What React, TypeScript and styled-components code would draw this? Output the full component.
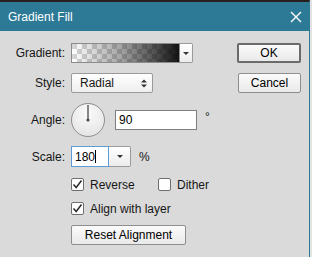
import styled, { createGlobalStyle } from "styled-components";

const GlobalStyle = createGlobalStyle`
  html, body {
    margin: 0;
    padding: 0;
    background: #e2e2e2;
  }
  body {
    font-family: "Liberation Sans", Arial, sans-serif;
    font-size: 12px;
    color: #161616;
  }
`;

export default function App() {
  return (
    <>
      <GlobalStyle />
      <Window>
        <TitleBar>
          <span>Gradient Fill</span>
          <svg width="12" height="12" viewBox="0 0 12 12">
            <path d="M1 1 L11 11 M11 1 L1 11" stroke="#fff" strokeWidth="1.4" />
          </svg>
        </TitleBar>
        <Body>
          <Form>
            <Row $h={20}>
              <Label>Gradient:</Label>
              <Combo $h={20}>
                <GradientSwatch />
                <DropButton $w={13}>
                  <Caret />
                </DropButton>
              </Combo>
            </Row>
            <Row $h={20} $mt={10}>
              <Label>Style:</Label>
              <Select>
                <span>Radial</span>
                <svg width="6" height="9" viewBox="0 0 6 9">
                  <path d="M0 3.5 L3 0.5 L6 3.5 Z M0 5.5 L3 8.5 L6 5.5 Z" fill="#333" />
                </svg>
              </Select>
            </Row>
            <Row $h={34} $mt={10}>
              <Label>Angle:</Label>
              <Inline $gap={10}>
                <Dial>
                  <svg width="34" height="34" viewBox="0 0 34 34">
                    <line x1="17" y1="17" x2="17" y2="2" stroke="#4a4a4a" strokeWidth="1.3" />
                    <circle cx="17" cy="17" r="1.6" fill="#4a4a4a" />
                  </svg>
                </Dial>
                <TextBox $w={82}>90</TextBox>
                <Unit $raised>°</Unit>
              </Inline>
            </Row>
            <Row $h={21} $mt={9}>
              <Label>Scale:</Label>
              <Inline $gap={8}>
                <Combo $h={21}>
                  <TextBox $w={38} $focused>
                    180<Cursor />
                  </TextBox>
                  <DropButton $w={22}>
                    <Caret />
                  </DropButton>
                </Combo>
                <Unit>%</Unit>
              </Inline>
            </Row>
            <Row $h={15} $mt={10}>
              <span />
              <Inline $gap={0}>
                <Check $w={87}>
                  <Box $checked />
                  Reverse
                </Check>
                <Check>
                  <Box />
                  Dither
                </Check>
              </Inline>
            </Row>
            <Row $h={15} $mt={9}>
              <span />
              <Check>
                <Box $checked />
                Align with layer
              </Check>
            </Row>
            <Row $h={20} $mt={9}>
              <span />
              <Button $w={115}>Reset Alignment</Button>
            </Row>
          </Form>
          <Actions>
            <Button $w={64} $default>OK</Button>
            <Button $w={63}>Cancel</Button>
          </Actions>
        </Body>
      </Window>
    </>
  );
}

function Box({ $checked }: { $checked?: boolean }) {
  return (
    <CheckBox>
      {$checked && (
        <svg width="11" height="11" viewBox="0 0 11 11">
          <path d="M1.5 5.5 L4.2 8.5 L9.5 1.5" fill="none" stroke="#2b2b2b" strokeWidth="1.5" />
        </svg>
      )}
    </CheckBox>
  );
}

const Window = styled.div`
  box-sizing: border-box;
  width: 310px;
  height: 257px;
  border-top: 2px solid #2a1d1e;
  border-right: 1px solid #2d7a97;
  background: #dadada;
`;

const TitleBar = styled.div`
  height: 29px;
  display: flex;
  align-items: center;
  justify-content: space-between;
  padding: 0 7px 0 8px;
  background: #2d7a97;
  color: #fff;
  font-size: 12px;
`;

const Body = styled.div`
  display: flex;
  padding-top: 12px;
`;

const Form = styled.div`
  display: flex;
  flex-direction: column;
  width: 220px;
`;

const Row = styled.div<{ $h: number; $mt?: number }>`
  display: grid;
  grid-template-columns: 65px auto;
  column-gap: 6px;
  align-items: center;
  height: ${(p) => p.$h}px;
  margin-top: ${(p) => p.$mt ?? 0}px;
`;

const Label = styled.span`
  text-align: right;
  white-space: nowrap;
`;

const Inline = styled.div<{ $gap: number }>`
  display: flex;
  align-items: center;
  gap: ${(p) => p.$gap}px;
`;

const Combo = styled.div<{ $h: number }>`
  display: flex;
  height: ${(p) => p.$h}px;
`;

const GradientSwatch = styled.div`
  box-sizing: border-box;
  width: 109px;
  height: 100%;
  border: 1px solid #8c8c8c;
  background:
    linear-gradient(to right, rgba(0, 0, 0, 0) 0%, rgba(0, 0, 0, 0.35) 45%, rgba(0, 0, 0, 0.92) 100%),
    repeating-conic-gradient(#ffffff 0% 25%, #d6d6d6 0% 50%) 0 0 / 10px 10px;
`;

const DropButton = styled.div<{ $w: number }>`
  box-sizing: border-box;
  width: ${(p) => p.$w}px;
  height: 100%;
  display: flex;
  align-items: center;
  justify-content: center;
  border: 1px solid #9a9a9a;
  border-left: none;
  border-radius: 0 2px 2px 0;
  background: linear-gradient(#ffffff, #ececec);
`;

const Caret = styled.span`
  width: 0;
  height: 0;
  border-left: 3px solid transparent;
  border-right: 3px solid transparent;
  border-top: 3px solid #333;
`;

const Select = styled.div`
  box-sizing: border-box;
  width: 82px;
  height: 20px;
  display: flex;
  align-items: center;
  justify-content: space-between;
  padding: 0 5px 0 8px;
  border: 1px solid #9a9a9a;
  border-radius: 2px;
  background: linear-gradient(#fefefe, #efefef);
`;

const Dial = styled.div`
  box-sizing: border-box;
  width: 34px;
  height: 34px;
  border-radius: 50%;
  border: 1px solid #8e8e8e;
  background: radial-gradient(circle at 50% 30%, #fafafa, #e6e6e6 80%);
  display: flex;
  align-items: center;
  justify-content: center;

  svg {
    margin: -1px;
  }
`;

const TextBox = styled.div<{ $w: number; $focused?: boolean }>`
  box-sizing: border-box;
  width: ${(p) => p.$w}px;
  height: ${(p) => (p.$focused ? "100%" : "20px")};
  display: flex;
  align-items: center;
  padding-left: 3px;
  background: #fff;
  border: 1px solid ${(p) => (p.$focused ? "#5c9bd6" : "#7e7e7e")};
  color: #000;
`;

const Cursor = styled.span`
  width: 1px;
  height: 13px;
  background: #000;
`;

const Unit = styled.span<{ $raised?: boolean }>`
  margin-left: ${(p) => (p.$raised ? "-2px" : "0")};
  position: relative;
  top: ${(p) => (p.$raised ? "-3px" : "0")};
`;

const Check = styled.label<{ $w?: number }>`
  display: flex;
  align-items: center;
  gap: 6px;
  width: ${(p) => (p.$w ? `${p.$w}px` : "auto")};
  white-space: nowrap;
`;

const CheckBox = styled.span`
  box-sizing: border-box;
  width: 13px;
  height: 13px;
  display: flex;
  align-items: center;
  justify-content: center;
  border: 1px solid #6f6f6f;
  border-radius: 2px;
  background: #fff;
`;

const Actions = styled.div`
  display: flex;
  flex-direction: column;
  align-items: flex-end;
  gap: 10px;
  margin-left: auto;
  padding-right: 8px;
`;

const Button = styled.div<{ $w: number; $default?: boolean }>`
  box-sizing: border-box;
  width: ${(p) => p.$w}px;
  height: 20px;
  display: flex;
  align-items: center;
  justify-content: center;
  border: ${(p) => (p.$default ? "2px solid #6b6b6b" : "1px solid #8e8e8e")};
  border-radius: 2px;
  background: linear-gradient(#fbfbfb, #e9e9e9);
  color: #000;
`;
